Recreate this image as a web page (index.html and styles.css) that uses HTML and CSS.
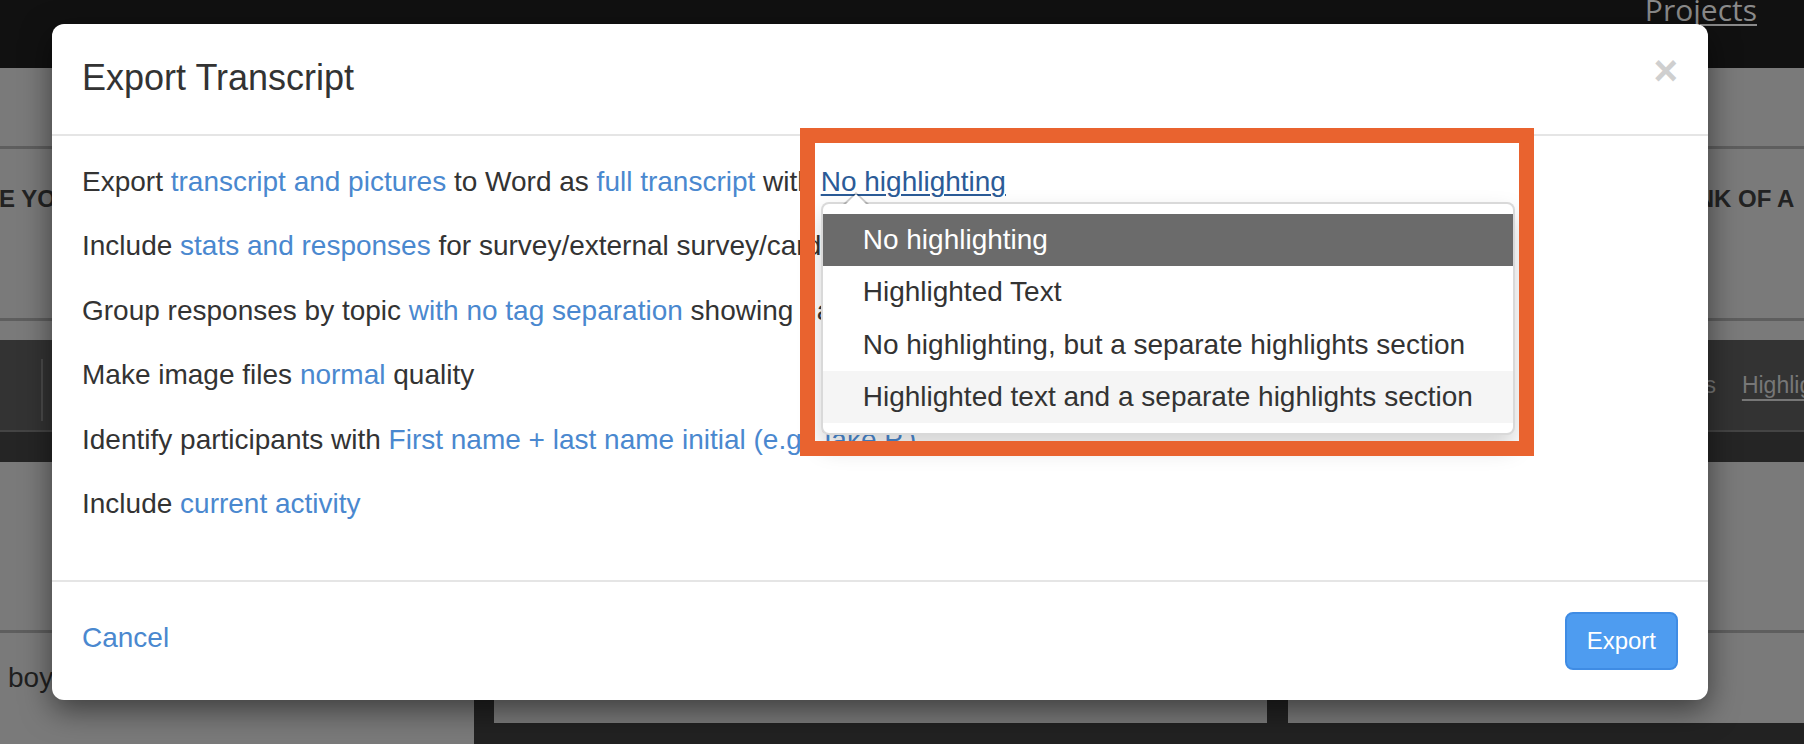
FILE: index.html
```html
<!DOCTYPE html>
<html lang="en">
<head>
<meta charset="utf-8">
<title>Export Transcript</title>
<link rel="stylesheet" href="styles.css">
</head>
<body>
<div class="page">
  <header class="topnav">
    <a class="topnav-link" href="#">Projects</a>
  </header>
  <div class="subhead"></div>
  <div class="titles">
    <div class="title-left">E YOU</div>
    <div class="title-right">THINK OF A</div>
  </div>
  <div class="gap-band"></div>
  <div class="toolbar">
    <span class="toolbar-divider"></span>
    <nav class="toolbar-tabs">
      <span class="tab">Transcripts</span>
      <a class="tab tab-active" href="#">Highlights</a>
    </nav>
  </div>
  <div class="subbar"></div>
  <div class="content-band"></div>
  <div class="lower">
    <div class="lower-left">boy</div>
    <div class="lower-right">
      <div class="panel panel-wide"></div>
      <div class="panel panel-fill"></div>
    </div>
  </div>
</div>

<div class="modal">
  <div class="modal-header">
    <h4 class="modal-title">Export Transcript</h4>
    <button class="close" type="button">&times;</button>
  </div>
  <div class="modal-body">
    <div class="opt">Export <a class="lnk">transcript and pictures</a> to Word as <a class="lnk">full transcript</a> with <span class="picker"><a class="lnk lnk-open">No highlighting</a>
      <ul class="menu">
        <li class="menu-item is-active">No highlighting</li>
        <li class="menu-item">Highlighted Text</li>
        <li class="menu-item">No highlighting, but a separate highlights section</li>
        <li class="menu-item is-hover">Highlighted text and a separate highlights section</li>
      </ul></span></div>
    <div class="opt">Include <a class="lnk">stats and responses</a> for survey/external survey/card sort activities</div>
    <div class="opt">Group responses by topic <a class="lnk">with no tag separation</a> showing names</div>
    <div class="opt">Make image files <a class="lnk">normal</a> quality</div>
    <div class="opt">Identify participants with <a class="lnk">First name + last name initial (e.g. Jake P.)</a></div>
    <div class="opt">Include <a class="lnk">current activity</a></div>
  </div>
  <div class="modal-footer">
    <a class="lnk cancel">Cancel</a>
    <button class="btn-export" type="button">Export</button>
  </div>
</div>

<div class="callout"></div>
</body>
</html>
```

FILE: styles.css
```css
* { box-sizing: border-box; }

html, body {
  margin: 0;
  padding: 0;
}

body {
  width: 1804px;
  height: 744px;
  overflow: hidden;
  position: relative;
  background: #7a7a7a;
  font-family: "Liberation Sans", Arial, Helvetica, sans-serif;
}

/* ---------- dimmed page behind the modal ---------- */
.page {
  display: flex;
  flex-direction: column;
  height: 744px;
}

.topnav {
  flex: none;
  height: 68px;
  background: #111;
  display: flex;
  justify-content: flex-end;
  align-items: flex-start;
  padding-right: 47px;
  overflow: hidden;
}

.topnav-link {
  font-family: "Open Sans", "Liberation Sans", sans-serif;
  font-size: 30px;
  line-height: 41px;
  margin-top: -11px;
  color: #8a8a8a;
  text-decoration: underline;
  text-decoration-thickness: 2px;
  text-underline-offset: 3px;
}

.subhead {
  flex: none;
  height: 81px;
  background: #7a7a7a;
  border-bottom: 3px solid #5e5e5e;
}

.titles {
  flex: none;
  height: 172px;
  border-bottom: 3px solid #5e5e5e;
  display: flex;
  padding-top: 33px;
  font-size: 24px;
  font-weight: bold;
  line-height: 34px;
  color: #222;
  white-space: nowrap;
  overflow: hidden;
}

.title-left {
  width: 1659px;
  margin-left: -1px;
}

.title-right {
  flex: none;
}

.gap-band {
  flex: none;
  height: 19px;
  background: #7a7a7a;
}

.toolbar {
  flex: none;
  height: 92px;
  background: #333;
  border-bottom: 2px solid #444;
  display: flex;
  align-items: flex-start;
  white-space: nowrap;
  overflow: hidden;
}

.toolbar-divider {
  flex: none;
  width: 2px;
  height: 62px;
  margin: 19px 0 0 41px;
  background: #4a4a4a;
}

.toolbar-tabs {
  display: flex;
  gap: 26px;
  margin-left: 1560px;
  font-size: 23px;
  line-height: 90px;
  color: #777;
}

.tab-active {
  color: #777;
  text-decoration: underline;
  text-decoration-thickness: 2px;
  text-underline-offset: 6px;
}

.subbar {
  flex: none;
  height: 30px;
  background: #252525;
}

.content-band {
  flex: none;
  height: 171px;
  background: #7a7a7a;
  border-bottom: 3px solid #5e5e5e;
}

.lower {
  flex: 1;
  display: flex;
}

.lower-left {
  flex: none;
  width: 474px;
  background: #7a7a7a;
  padding: 25px 0 0 8px;
  font-size: 28px;
  line-height: 40px;
  color: #1f1f1f;
}

.lower-right {
  flex: 1;
  display: flex;
  gap: 21px;
  background: #222;
  padding: 0 0 21px 20px;
}

.panel {
  background: #7a7a7a;
}

.panel-wide {
  width: 773px;
}

.panel-fill {
  flex: 1;
}

/* ---------- modal ---------- */
.modal {
  position: absolute;
  left: 52px;
  top: 24px;
  width: 1656px;
  background: #fff;
  border-radius: 12px;
  box-shadow: 0 10px 30px rgba(0, 0, 0, 0.5);
  color: #333;
  font-size: 28px;
  z-index: 2;
}

.modal-header {
  display: flex;
  justify-content: space-between;
  align-items: flex-start;
  padding: 28px 30px 31px;
  border-bottom: 2px solid #e5e5e5;
}

.modal-title {
  margin: 0;
  font-size: 36px;
  font-weight: normal;
  line-height: 51px;
  color: #333;
}

.close {
  margin-top: -2px;
  padding: 0;
  border: 0;
  background: none;
  font-family: "Liberation Sans", Arial, sans-serif;
  font-size: 42px;
  font-weight: bold;
  line-height: 1;
  color: #cfcfcf;
}

.modal-body {
  display: flex;
  flex-direction: column;
  gap: 24.4px;
  padding: 26px 30px 56px;
}

.opt {
  line-height: 40px;
  white-space: nowrap;
}

.lnk {
  color: #4a88cf;
  text-decoration: none;
}

.picker {
  position: relative;
  display: inline-block;
}

.lnk-open {
  color: #2b5b97;
  text-decoration: underline;
  text-decoration-thickness: 2px;
  text-underline-offset: 3px;
}

.menu {
  position: absolute;
  top: 100%;
  left: 0;
  margin: 0;
  padding: 10px 0;
  list-style: none;
  background: #fff;
  border: 2px solid rgba(0, 0, 0, 0.15);
  border-radius: 8px;
  box-shadow: 0 12px 24px rgba(0, 0, 0, 0.175);
  white-space: nowrap;
  z-index: 3;
}

.menu::before,
.menu::after {
  content: "";
  position: absolute;
  width: 0;
  height: 0;
  border-style: solid;
  border-color: transparent;
}

.menu::before {
  top: -12px;
  left: 20px;
  border-width: 0 13px 12px 13px;
  border-bottom-color: rgba(0, 0, 0, 0.2);
}

.menu::after {
  top: -10px;
  left: 22px;
  border-width: 0 11px 11px 11px;
  border-bottom-color: #fff;
}

.menu-item {
  padding: 6px 40px;
  line-height: 40px;
  font-size: 28px;
  color: #333;
}

.menu-item + .menu-item {
  margin-top: 0.4px;
}

.menu-item.is-active {
  background: #6b6b6b;
  color: #fff;
}

.menu-item.is-hover {
  background: #f5f5f5;
}

.modal-footer {
  display: flex;
  justify-content: space-between;
  align-items: center;
  padding: 30px;
  border-top: 2px solid #e5e5e5;
}

.cancel {
  line-height: 40px;
  margin-top: -6px;
}

.btn-export {
  padding: 10px 20px;
  border: 2px solid #3f8ce4;
  border-radius: 8px;
  background: #4e9cf0;
  color: #fff;
  font-family: "Liberation Sans", Arial, sans-serif;
  font-size: 24px;
  line-height: 34px;
}

/* ---------- annotation frame ---------- */
.callout {
  position: absolute;
  left: 800px;
  top: 128px;
  width: 734px;
  height: 328px;
  border: 15px solid #e9632f;
  z-index: 4;
}
```
